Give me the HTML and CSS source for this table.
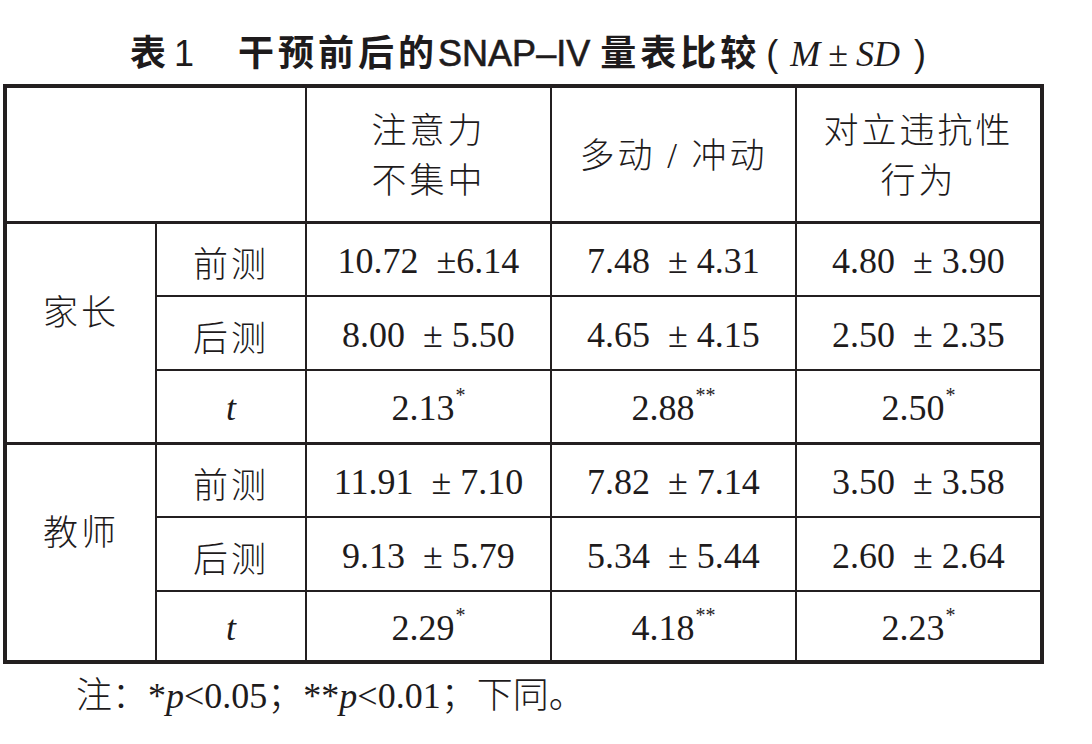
FILE: index.html
```html
<!DOCTYPE html>
<html lang="zh">
<head>
<meta charset="utf-8">
<link rel="stylesheet" href="styles.css">
</head>
<body>
<div class="page">
  <h1 class="title"><span class="hz">表</span><span class="num">1</span><span class="gap"></span><span class="hz">干预前后的</span><span class="lat">SNAP–IV</span> <span class="hz">量表比较</span><span class="paren">(</span><i class="ms">M</i><span class="pm">±</span><i class="ms">SD</i><span class="paren">)</span></h1>
  <table class="tbl">
    <colgroup>
      <col class="c1"><col class="c2"><col class="c3"><col class="c4"><col class="c5">
    </colgroup>
    <tr class="head">
      <td colspan="2"></td>
      <td class="cjk">注意力<br>不集中</td>
      <td class="cjk">多动 / 冲动</td>
      <td class="cjk">对立违抗性<br>行为</td>
    </tr>
    <tr class="row group-start">
      <td rowspan="3" class="cjk group">家长</td>
      <td class="cjk">前测</td>
      <td>10.72&nbsp; ±6.14</td>
      <td>7.48&nbsp; ± 4.31</td>
      <td>4.80&nbsp; ± 3.90</td>
    </tr>
    <tr class="row">
      <td class="cjk">后测</td>
      <td>8.00&nbsp; ± 5.50</td>
      <td>4.65&nbsp; ± 4.15</td>
      <td>2.50&nbsp; ± 2.35</td>
    </tr>
    <tr class="row row-t">
      <td><i>t</i></td>
      <td>2.13<sup>*</sup></td>
      <td>2.88<sup>**</sup></td>
      <td>2.50<sup>*</sup></td>
    </tr>
    <tr class="row group-start">
      <td rowspan="3" class="cjk group">教师</td>
      <td class="cjk">前测</td>
      <td>11.91&nbsp; ± 7.10</td>
      <td>7.82&nbsp; ± 7.14</td>
      <td>3.50&nbsp; ± 3.58</td>
    </tr>
    <tr class="row">
      <td class="cjk">后测</td>
      <td>9.13&nbsp; ± 5.79</td>
      <td>5.34&nbsp; ± 5.44</td>
      <td>2.60&nbsp; ± 2.64</td>
    </tr>
    <tr class="row row-last">
      <td><i>t</i></td>
      <td>2.29<sup>*</sup></td>
      <td>4.18<sup>**</sup></td>
      <td>2.23<sup>*</sup></td>
    </tr>
  </table>
  <p class="note">注：*<i>p</i>&lt;0.05；**<i>p</i>&lt;0.01；下同。</p>
</div>
</body>
</html>
```

FILE: styles.css
```css
html, body {
  margin: 0;
  padding: 0;
  background: #ffffff;
}

.page {
  width: 1092px;
  height: 744px;
  overflow: hidden;
  color: #1e1b1c;
}

.title {
  margin: 0;
  padding-top: 34px;
  height: 50px;
  line-height: 40px;
  font-family: "Liberation Sans", "Noto Sans CJK SC", sans-serif;
  font-size: 36px;
  font-weight: 700;
  text-align: center;
  padding-right: 36px;
  white-space: nowrap;
}

.title .hz {
  letter-spacing: 4px;
}

.title .num {
  font-weight: 400;
  margin-left: 4px;
}

.title .lat {
  font-weight: 400;
  -webkit-text-stroke: 0.6px #1e1b1c;
}

.title .gap {
  display: inline-block;
  width: 44px;
}

.title .paren {
  font-weight: 400;
  font-family: "Liberation Sans", sans-serif;
  margin: 0 12px 0 6px;
}

.title .paren:last-child {
  margin: 0 0 0 14px;
}

.title .pm {
  font-weight: 400;
  font-family: "Liberation Serif", serif;
  margin: 0 8px;
}

.title .ms {
  font-family: "Liberation Serif", serif;
  font-weight: 400;
  font-size: 36px;
}

.tbl {
  margin-left: 3px;
  border-collapse: collapse;
  table-layout: fixed;
  width: 1041px;
  border: 4px solid #231f20;
  font-family: "Liberation Serif", "Noto Sans CJK SC", serif;
  font-size: 36px;
}

.c1 { width: 151px; }
.c2 { width: 150px; }
.c3 { width: 245px; }
.c4 { width: 245px; }
.c5 { width: 246px; }

.tbl td {
  border: 2px solid #231f20;
  text-align: center;
  vertical-align: middle;
  padding: 4px 0 0 0;
  white-space: nowrap;
}

.tbl .cjk {
  font-size: 35px;
  letter-spacing: 3px;
  font-weight: 300;
}

.tbl .group {
  padding: 0 0 46px 0;
}

.head {
  height: 136px;
}

.head td {
  line-height: 50px;
  border-bottom-width: 3px;
  padding-top: 6px;
}

.row {
  height: 74px;
}

.row-t {
  height: 73px;
}

.row-last {
  height: 71px;
}

.group-start td {
  border-top-width: 3px;
}

.tbl sup {
  font-size: 20px;
  vertical-align: 0;
  position: relative;
  top: -18px;
  margin-left: 1px;
}

.note {
  margin: 0;
  padding-left: 76px;
  padding-top: 12px;
  font-family: "Liberation Serif", "Noto Sans CJK SC", serif;
  font-size: 36px;
  line-height: 40px;
  font-weight: 300;
}
```
